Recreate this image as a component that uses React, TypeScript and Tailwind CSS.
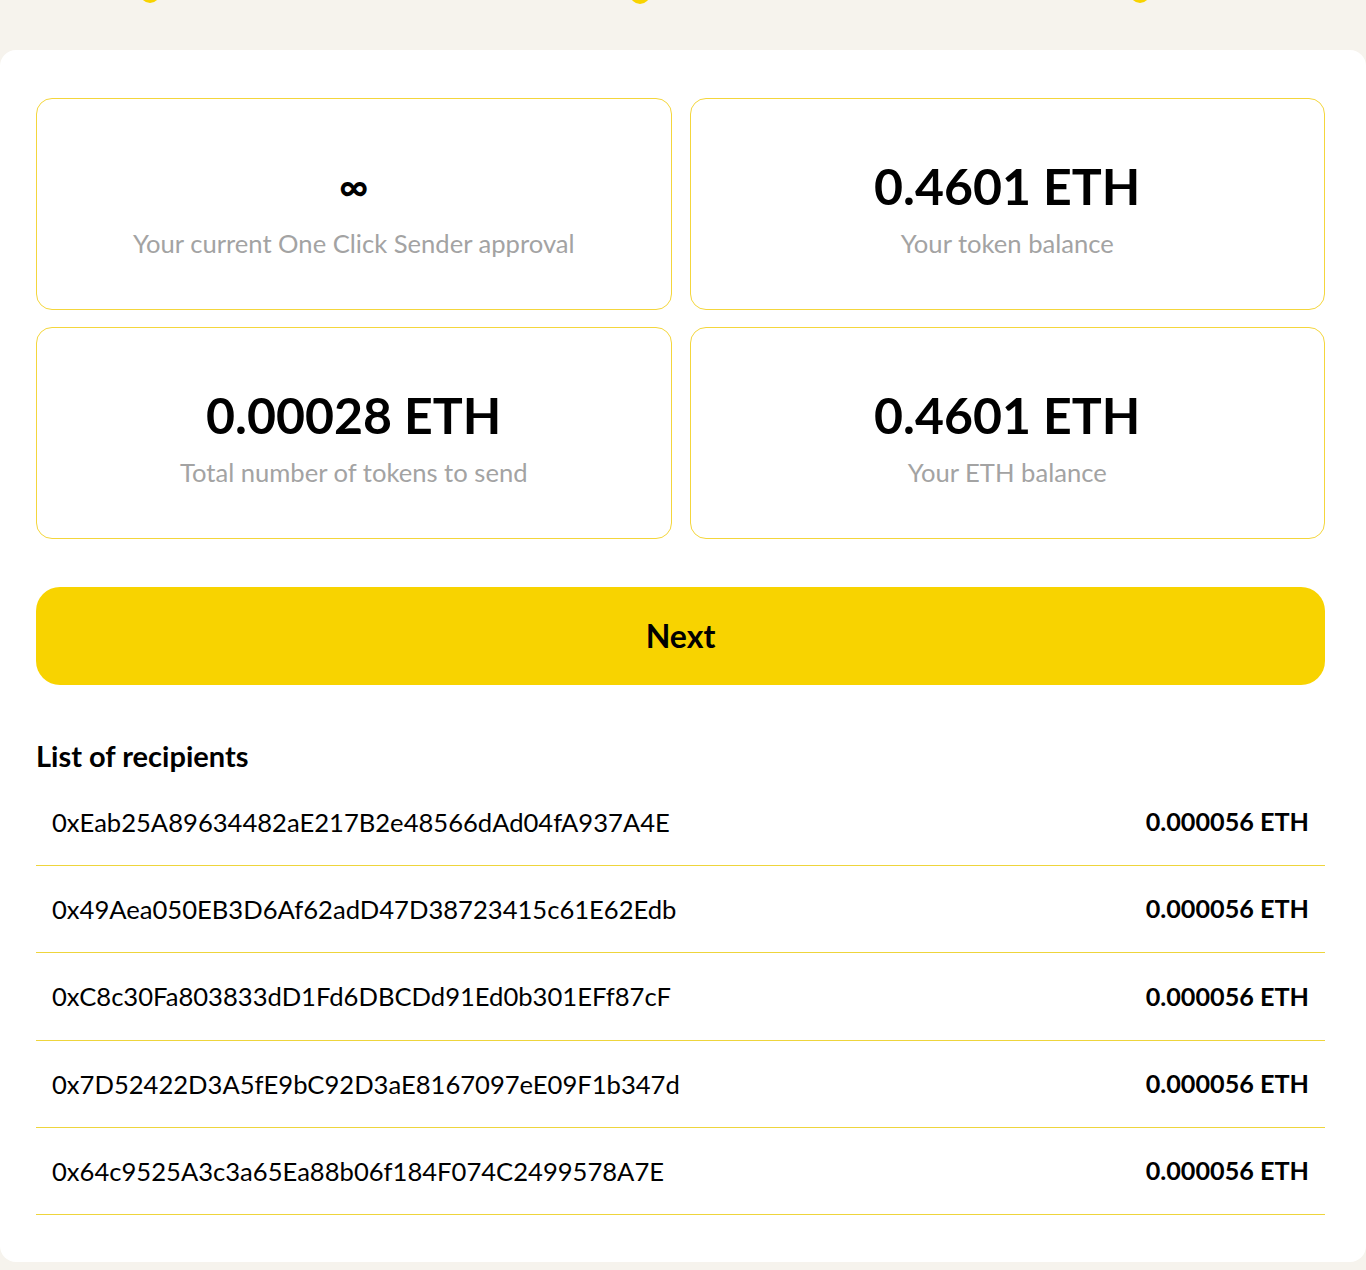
const recipients = [
  { address: "0xEab25A89634482aE217B2e48566dAd04fA937A4E", amount: "0.000056 ETH" },
  { address: "0x49Aea050EB3D6Af62adD47D38723415c61E62Edb", amount: "0.000056 ETH" },
  { address: "0xC8c30Fa803833dD1Fd6DBCDd91Ed0b301EFf87cF", amount: "0.000056 ETH" },
  { address: "0x7D52422D3A5fE9bC92D3aE8167097eE09F1b347d", amount: "0.000056 ETH" },
  { address: "0x64c9525A3c3a65Ea88b06f184F074C2499578A7E", amount: "0.000056 ETH" },
];

const stats = [
  { value: "∞", label: "Your current One Click Sender approval", small: true },
  { value: "0.4601 ETH", label: "Your token balance" },
  { value: "0.00028 ETH", label: "Total number of tokens to send" },
  { value: "0.4601 ETH", label: "Your ETH balance" },
];

const App = () => {
  return (
    <div
      className="min-h-[1270px] bg-[#f6f3ed] overflow-hidden"
      style={{ fontFamily: "Lato, 'Open Sans', sans-serif" }}
    >
      {/* bottom of step dots above */}
      <div className="h-[50px] flex pl-[140px]">
        <div className="w-[20px] h-[20px] -mt-[17px] rounded-full bg-[#f8d300]" />
        <div className="w-[20px] h-[20px] -mt-[16px] ml-[470px] rounded-full bg-[#f8d300]" />
        <div className="w-[20px] h-[20px] -mt-[17px] ml-[480px] rounded-full bg-[#f8d300]" />
      </div>

      <div className="bg-white rounded-[16px] pl-[36px] pr-[41px] pt-[48px] pb-[47px]">
        <div className="grid grid-cols-2 gap-x-[18px] gap-y-[17px]">
          {stats.map((s, i) => (
            <div
              key={i}
              className="h-[212px] border border-[#f4d63c] rounded-[16px] flex flex-col items-center justify-center pt-[6px]"
            >
              <div
                className={
                  s.small
                    ? "text-[40px] leading-[60px] font-bold text-black"
                    : "text-[50px] leading-[60px] font-bold text-black"
                }
              >
                {s.value}
              </div>
              <div className="text-[25.6px] leading-[32px] text-[#a3a3a3] mt-[11px]">
                {s.label}
              </div>
            </div>
          ))}
        </div>

        <button className="mt-[48px] w-full h-[98px] rounded-[24px] bg-[#f8d300] text-[32px] font-bold text-black">
          Next
        </button>

        <h2 className="mt-[53px] text-[29px] leading-[36px] font-bold text-black">
          List of recipients
        </h2>

        <div className="mt-[5px]">
          {recipients.map((r, i) => (
            <div
              key={i}
              className={
                i === 2
                  ? "h-[88px] flex items-center justify-between px-[16px] border-b border-[#eed53c]"
                  : "h-[87px] flex items-center justify-between px-[16px] border-b border-[#eed53c]"
              }
            >
              <span className="text-[25.6px] text-black">{r.address}</span>
              <span className="text-[25.2px] font-bold text-black">{r.amount}</span>
            </div>
          ))}
        </div>
      </div>
    </div>
  );
};

export default App;
